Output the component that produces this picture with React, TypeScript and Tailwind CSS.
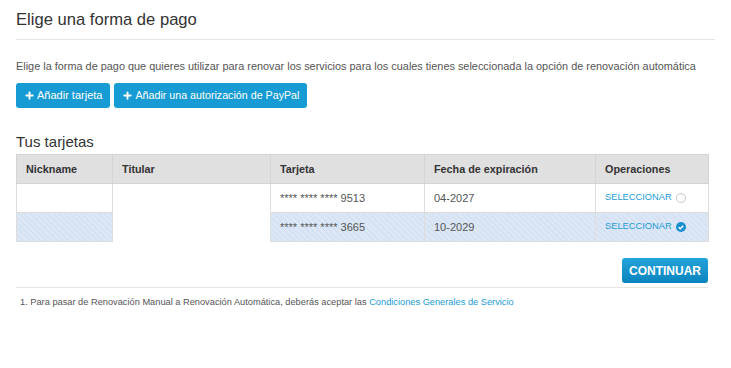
import { Plus } from 'lucide-react'

const stripe =
  'bg-[repeating-linear-gradient(45deg,#d4e1f3_0px,#d4e1f3_2px,#dfe9f6_2px,#dfe9f6_4px)]'

function Radio({ checked }: { checked?: boolean }) {
  if (checked) {
    return (
      <svg width="10" height="10" viewBox="0 0 12 12" className="inline-block">
        <circle cx="6" cy="6" r="6" fill="#1a8fd0" />
        <path d="M3.3 6.2l1.8 1.8 3.6-3.6" stroke="#fff" strokeWidth="1.8" fill="none" />
      </svg>
    )
  }
  return <span className="inline-block w-[10px] h-[10px] rounded-full border border-[#c8c8c8] bg-white" />
}

export default function App() {
  const cell = 'border border-[#dddddd] px-[9px] text-[11px] text-[#555] align-middle'
  return (
    <div className="w-[731px] h-[368px] bg-white font-['Liberation_Sans',Arial,sans-serif] px-4 pt-[10px]">
      <h1 className="text-[16.6px] leading-[20px] text-[#333] pb-[9px] border-b border-[#e5e5e5]">
        Elige una forma de pago
      </h1>

      <p className="mt-[19px] text-[10.9px] leading-[14px] text-[#555] whitespace-nowrap">
        Elige la forma de pago que quieres utilizar para renovar los servicios para los cuales tienes seleccionada la opción de renovación automática
      </p>

      <div className="mt-[10px] flex gap-1">
        <button className="h-[25px] px-[8px] rounded-[3px] bg-[#179bd4] text-white text-[11px] flex items-center gap-[2px]">
          <Plus size={11} strokeWidth={4} />
          Añadir tarjeta
        </button>
        <button className="h-[25px] px-[8px] rounded-[3px] bg-[#179bd4] text-white text-[10.7px] flex items-center gap-[2px]">
          <Plus size={11} strokeWidth={4} />
          Añadir una autorización de PayPal
        </button>
      </div>

      <h2 className="mt-[25px] text-[15px] leading-[18px] text-[#333]">Tus tarjetas</h2>

      <table className="mt-[3px] w-[692px] border-collapse table-fixed">
        <colgroup>
          <col className="w-[96px]" />
          <col className="w-[158px]" />
          <col className="w-[154px]" />
          <col className="w-[171px]" />
          <col className="w-[113px]" />
        </colgroup>
        <thead>
          <tr className="h-[29px] bg-[#e0e0e0]">
            {['Nickname', 'Titular', 'Tarjeta', 'Fecha de expiración', 'Operaciones'].map((h) => (
              <th key={h} className="border border-[#d4d4d4] px-[9px] text-left text-[10.8px] font-bold text-[#333]">
                {h}
              </th>
            ))}
          </tr>
        </thead>
        <tbody>
          <tr className="h-[29px]">
            <td className={cell}></td>
            <td rowSpan={2} className="bg-white border-x border-[#dddddd]"></td>
            <td className={cell}>**** **** **** 9513</td>
            <td className={cell}>04-2027</td>
            <td className={cell}>
              <span className="flex items-center gap-[4px] text-[#1a9bd7] text-[9.3px]">
                SELECCIONAR <Radio />
              </span>
            </td>
          </tr>
          <tr className="h-[29px]">
            <td className={`${cell} ${stripe}`}></td>
            <td className={`${cell} ${stripe}`}>**** **** **** 3665</td>
            <td className={`${cell} ${stripe}`}>10-2029</td>
            <td className={`${cell} ${stripe}`}>
              <span className="flex items-center gap-[4px] text-[#1a9bd7] text-[9.3px]">
                SELECCIONAR <Radio checked />
              </span>
            </td>
          </tr>
        </tbody>
      </table>

      <div className="w-[692px] mt-[16px] flex justify-end pb-[4px] border-b border-[#e5e5e5]">
        <button className="h-[25px] px-[7px] rounded-[3px] bg-gradient-to-b from-[#22a4da] to-[#0a84be] text-white text-[12px] font-bold">
          CONTINUAR
        </button>
      </div>

      <p className="mt-[8px] pl-1 text-[9.25px] leading-[12px] text-[#555]">
        1. Para pasar de Renovación Manual a Renovación Automática, deberás aceptar las{' '}
        <span className="text-[#1a9bd7]">Condiciones Generales de Servicio</span>
      </p>
    </div>
  )
}
